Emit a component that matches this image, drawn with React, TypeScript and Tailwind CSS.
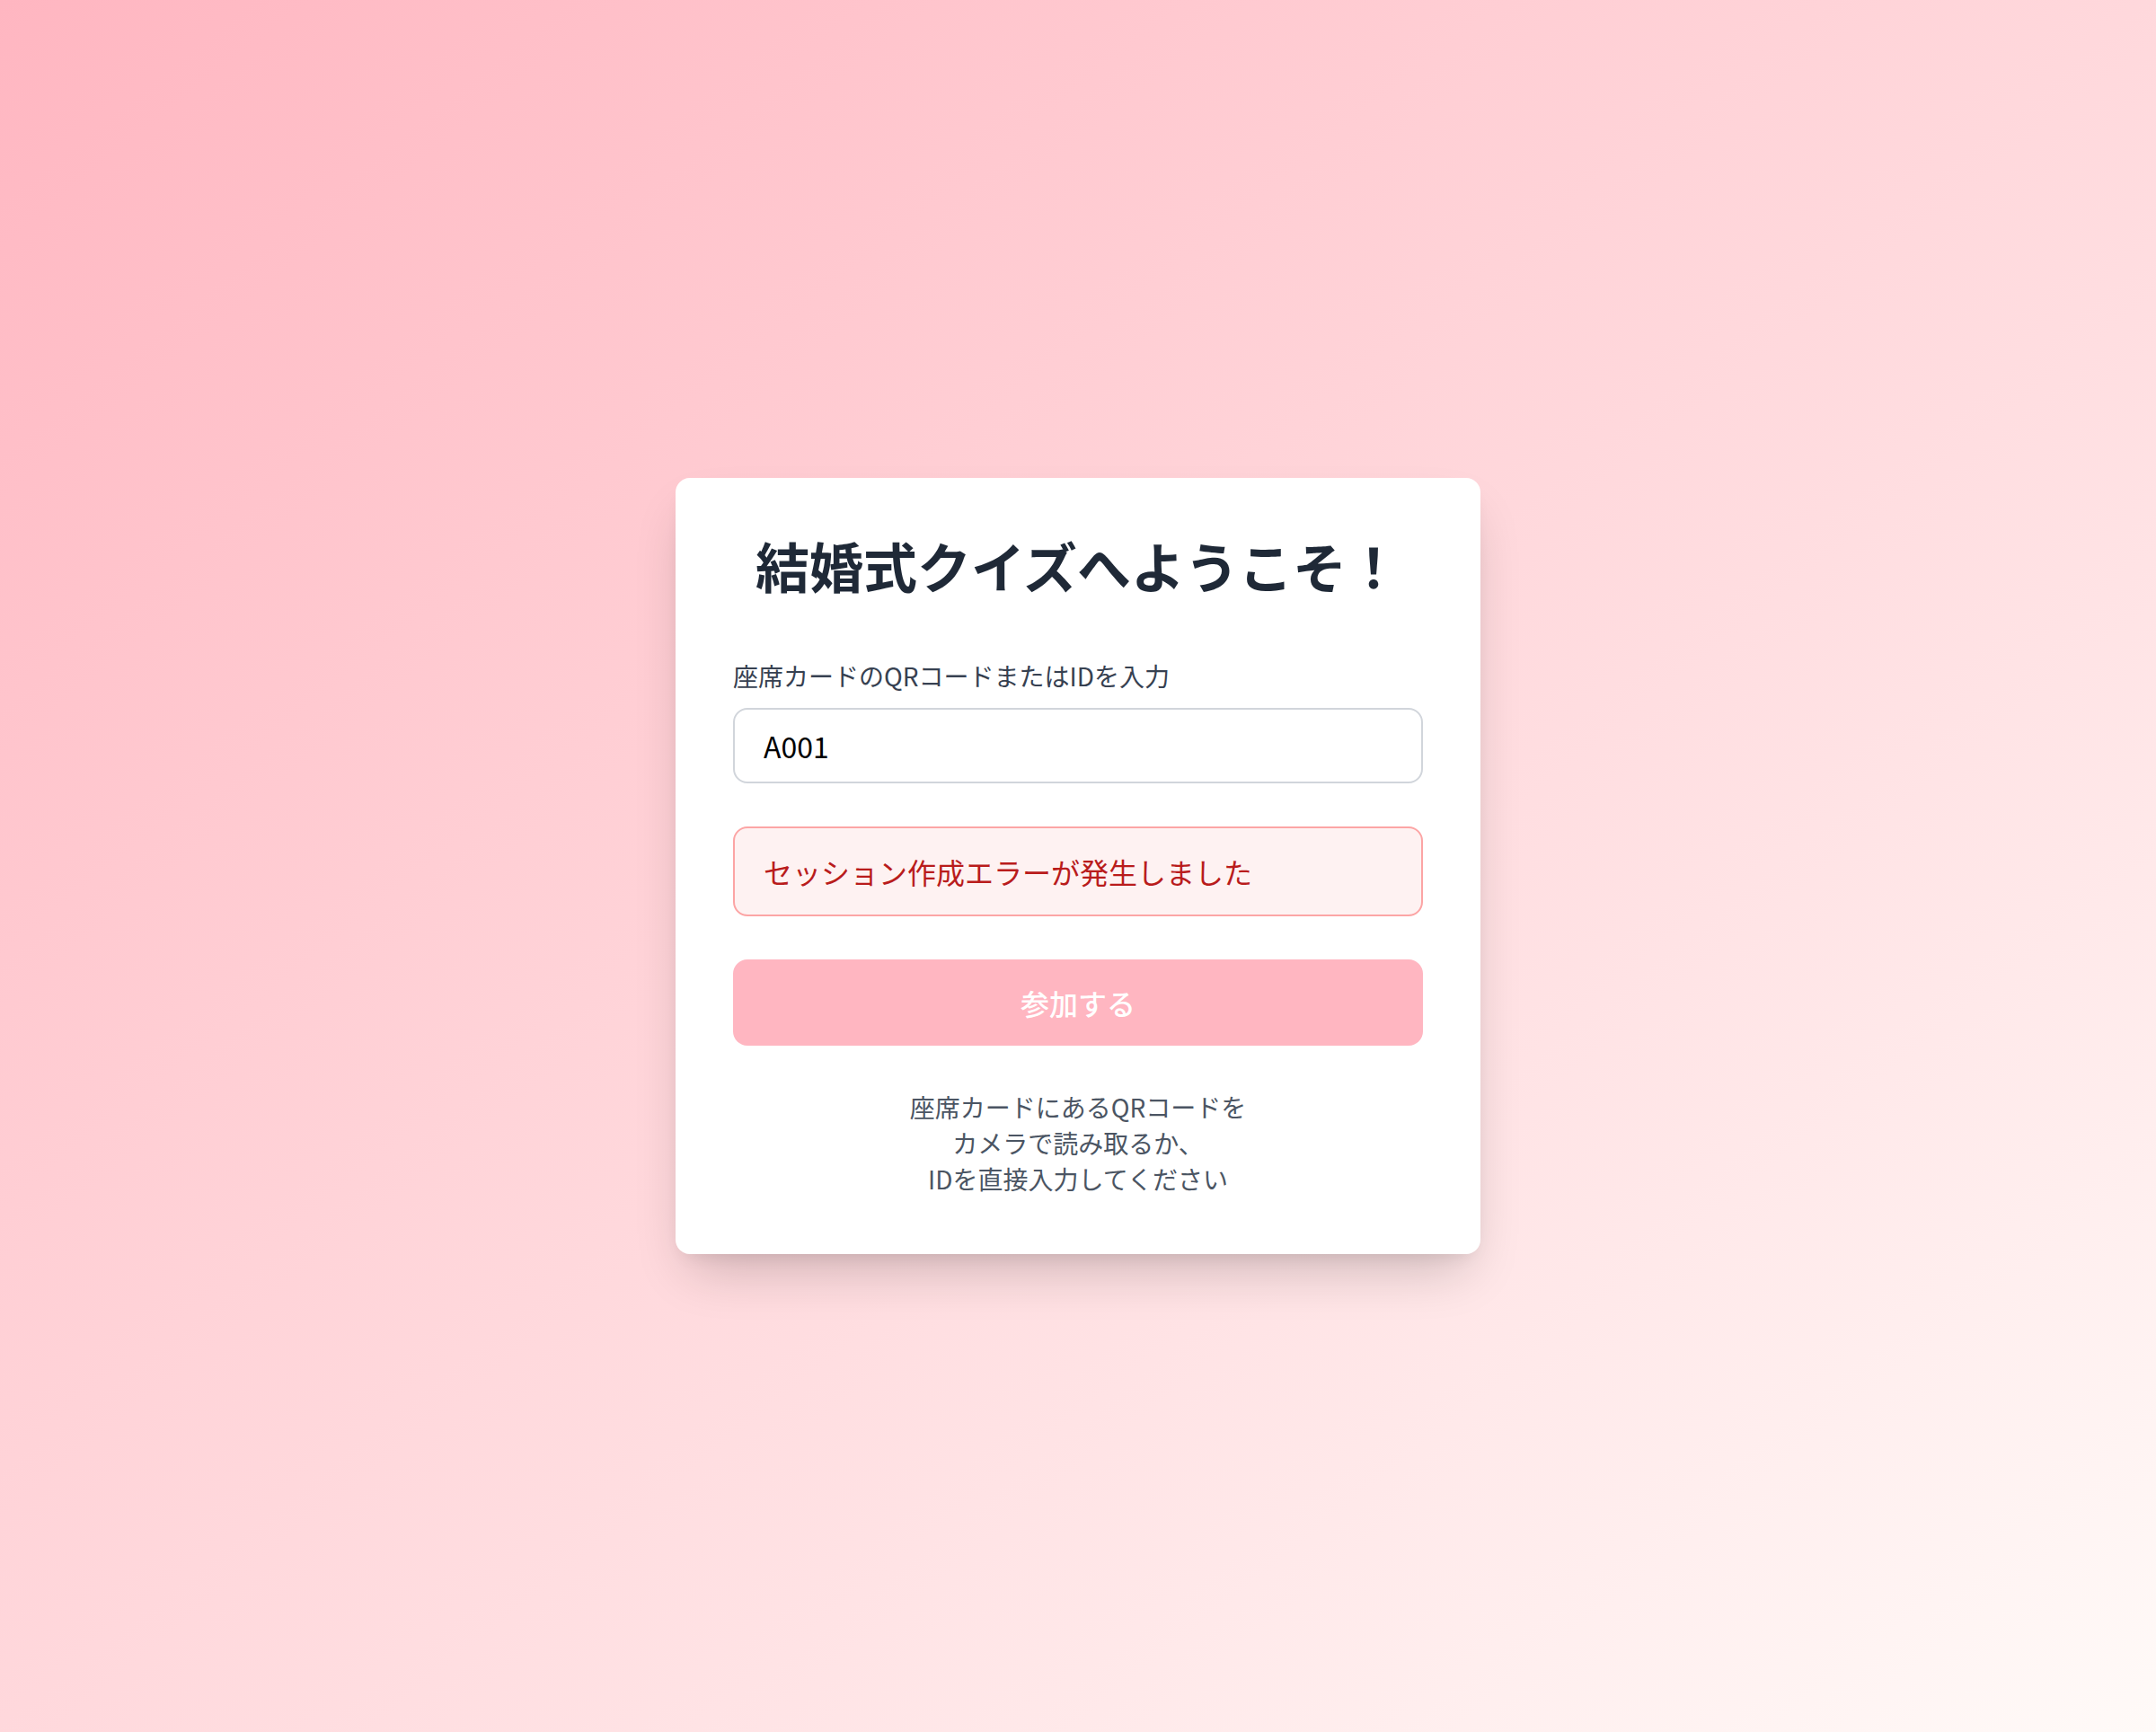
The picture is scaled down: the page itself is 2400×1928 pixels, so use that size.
import { useState } from "react";

const font = { fontFamily: '"Noto Sans CJK JP", "Noto Sans", sans-serif' };

export default function App() {
  const [seatId, setSeatId] = useState("A001");

  return (
    <div
      className="min-h-screen w-full flex items-center justify-center bg-gradient-to-br from-[#ffb6c1] to-[#fffaf8]"
      style={font}
    >
      <div className="w-[896px] rounded-[16px] bg-white p-[64px] shadow-[0_30px_60px_-15px_rgba(0,0,0,0.2),0_10px_20px_-10px_rgba(0,0,0,0.1)]">
        <h1 className="mb-[64px] text-center text-[60px] leading-[66px] pb-[6px] font-bold text-[#1f2937]">
          結婚式クイズへようこそ！
        </h1>

        {/* Seat ID */}
        <div className="mb-[48px]">
          <label className="mb-[16px] block text-[28px] leading-[40px] text-[#374151]">
            座席カードのQRコードまたはIDを入力
          </label>
          <input
            value={seatId}
            onChange={(e) => setSeatId(e.target.value)}
            className="block h-[84px] w-full rounded-[16px] border-2 border-[#d1d5db] px-[32px] text-[32px] leading-[48px] text-black outline-none"
            style={font}
          />
        </div>

        {/* Error */}
        <div className="mb-[48px] rounded-[16px] border-2 border-[#fca5a5] bg-[#fef2f2] px-[32px] py-[24px] text-[32px] leading-[48px] text-[#b91c1c]">
          セッション作成エラーが発生しました
        </div>

        <button
          disabled
          className="block w-full rounded-[16px] bg-[#ffb6c1] py-[24px] text-[32px] leading-[48px] font-medium text-white"
          style={font}
        >
          参加する
        </button>

        <p className="mt-[48px] text-center text-[28px] leading-[40px] text-[#4b5563]">
          座席カードにあるQRコードを
          <br />
          カメラで読み取るか、
          <br />
          IDを直接入力してください
        </p>
      </div>
    </div>
  );
}
